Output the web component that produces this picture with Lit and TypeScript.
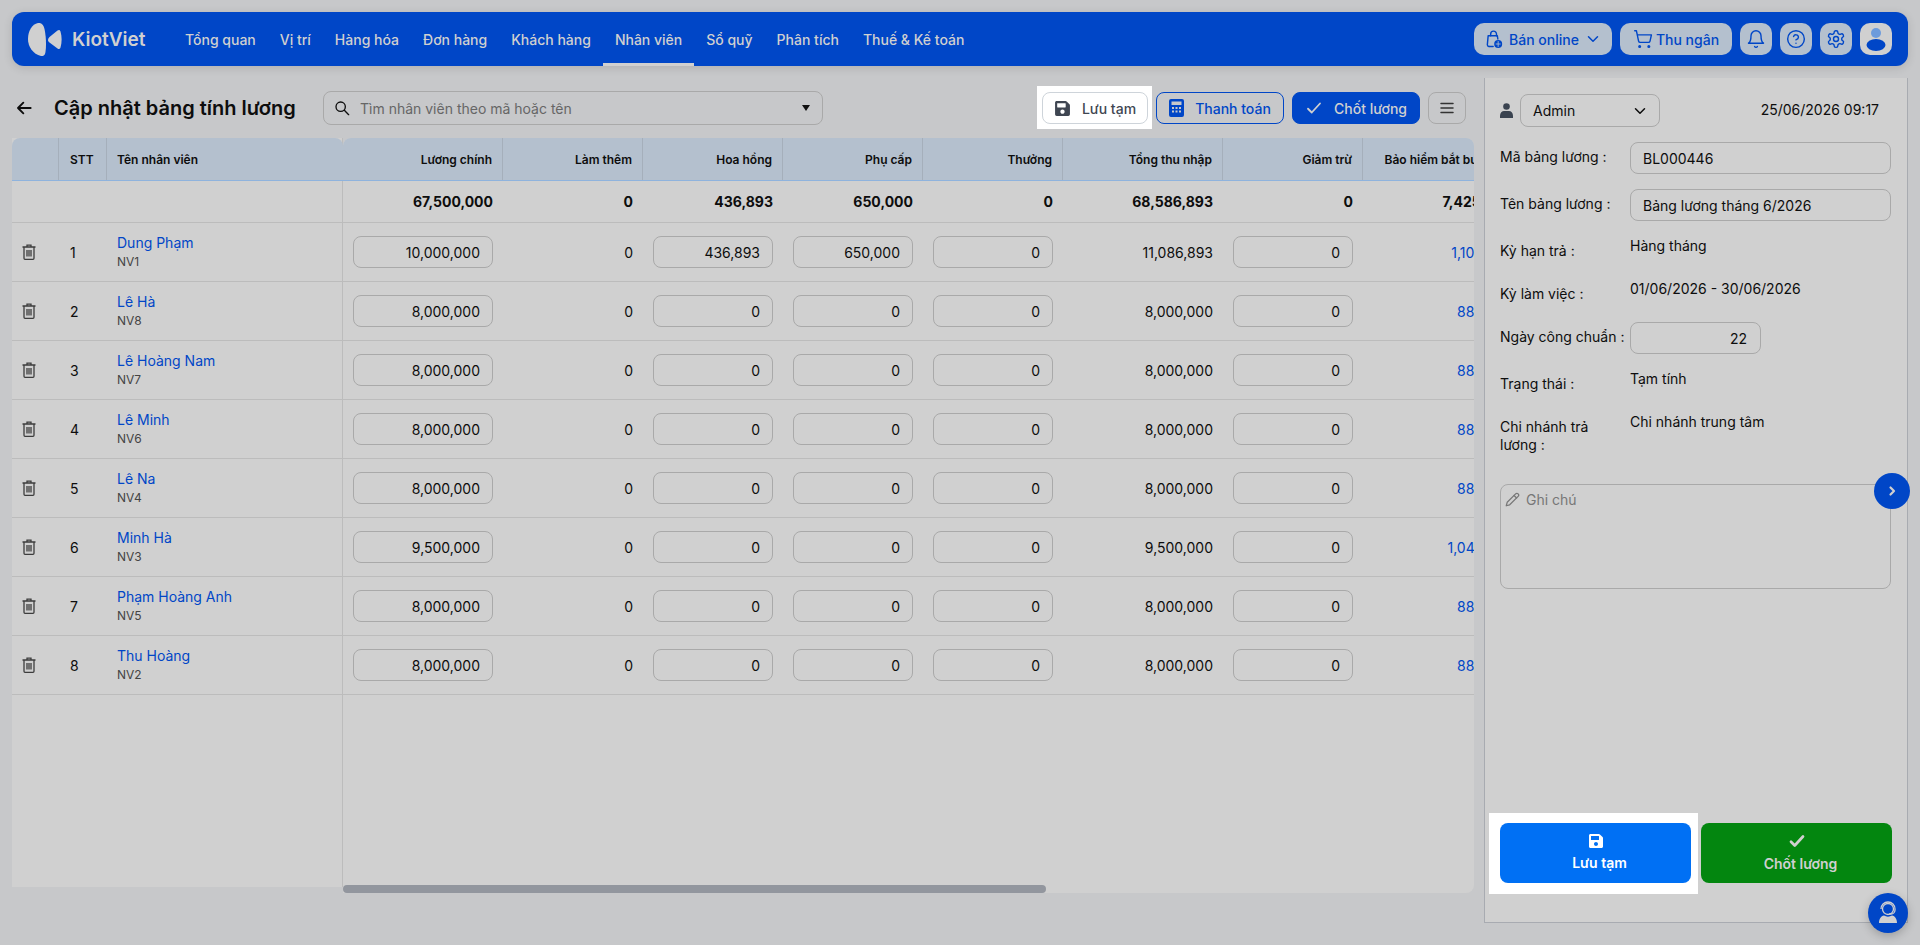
import { LitElement, html, css, svg } from "lit";
import { customElement } from "lit/decorators.js";

const NAV = ["Tổng quan", "Vị trí", "Hàng hóa", "Đơn hàng", "Khách hàng", "Nhân viên", "Sổ quỹ", "Phân tích", "Thuế & Kế toán"];

const COLS = [
  { label: "Lương chính", width: 160 },
  { label: "Làm thêm", width: 140 },
  { label: "Hoa hồng", width: 140 },
  { label: "Phụ cấp", width: 140 },
  { label: "Thưởng", width: 140 },
  { label: "Tổng thu nhập", width: 160 },
  { label: "Giảm trừ", width: 140 },
  { label: "Bảo hiểm bắt buộc", width: 160 },
];

const TOTALS = ["67,500,000", "0", "436,893", "650,000", "0", "68,586,893", "0", "7,425,000"];

const STAFF = [
  { name: "Dung Phạm", code: "NV1", base: "10,000,000", bonus: "436,893", allowance: "650,000", total: "11,086,893", ins: "1,100,000" },
  { name: "Lê Hà", code: "NV8", base: "8,000,000", bonus: "0", allowance: "0", total: "8,000,000", ins: "880,000" },
  { name: "Lê Hoàng Nam", code: "NV7", base: "8,000,000", bonus: "0", allowance: "0", total: "8,000,000", ins: "880,000" },
  { name: "Lê Minh", code: "NV6", base: "8,000,000", bonus: "0", allowance: "0", total: "8,000,000", ins: "880,000" },
  { name: "Lê Na", code: "NV4", base: "8,000,000", bonus: "0", allowance: "0", total: "8,000,000", ins: "880,000" },
  { name: "Minh Hà", code: "NV3", base: "9,500,000", bonus: "0", allowance: "0", total: "9,500,000", ins: "1,045,000" },
  { name: "Phạm Hoàng Anh", code: "NV5", base: "8,000,000", bonus: "0", allowance: "0", total: "8,000,000", ins: "880,000" },
  { name: "Thu Hoàng", code: "NV2", base: "8,000,000", bonus: "0", allowance: "0", total: "8,000,000", ins: "880,000" },
];

const stroke = (size: number, body: unknown, sw = 2) => html`<svg
  width=${size}
  height=${size}
  viewBox="0 0 24 24"
  fill="none"
  stroke="currentColor"
  stroke-width=${sw}
  stroke-linecap="round"
  stroke-linejoin="round"
>${body}</svg>`;

const saveIcon = (size: number) => html`<svg width=${size} height=${size} viewBox="0 0 448 512" fill="currentColor">
  <path d="M433.941 129.941l-83.882-83.882A48 48 0 0 0 316.118 32H48C21.49 32 0 53.49 0 80v352c0 26.51 21.49 48 48 48h352c26.51 0 48-21.49 48-48V163.882a48 48 0 0 0-14.059-33.941zM224 416c-35.346 0-64-28.654-64-64 0-35.346 28.654-64 64-64s64 28.654 64 64c0 35.346-28.654 64-64 64zm96-304.52V212c0 6.627-5.373 12-12 12H76c-6.627 0-12-5.373-12-12V108c0-6.627 5.373-12 12-12h228.52c3.183 0 6.235 1.264 8.485 3.515l3.48 3.48A11.996 11.996 0 0 1 320 111.48z" />
</svg>`;

const calcIcon = html`<svg width="15" height="18" viewBox="0 0 15 18" fill="currentColor">
  <path fill-rule="evenodd" d="M2 0h11a2 2 0 0 1 2 2v14a2 2 0 0 1-2 2H2a2 2 0 0 1-2-2V2a2 2 0 0 1 2-2zm.5 2.500v3.500h10V2.500zM3 8v2h2V8zm3.500 0v2h2V8zM10 8v2h2V8zM3 11.500v2h2v-2zm3.500 0v2h2v-2zm3.500 0v2h2v-2z" />
</svg>`;

const trashIcon = html`<svg width="14" height="16" viewBox="0 0 14 16" fill="none" stroke="currentColor" stroke-width="1.300">
  <path d="M.5 3h13M5 3V1.200h4V3M2 3v11.300a1 1 0 0 0 1 1h8a1 1 0 0 0 1-1V3M5 6v6.500M7 6v6.500M9 6v6.500" />
</svg>`;

const userIcon = html`<svg width="13" height="15" viewBox="0 0 13 15" fill="currentColor">
  <circle cx="6.500" cy="3.500" r="3.300" />
  <path d="M0 15v-2.500C0 10 2 8 4 8h5c2 0 4 2 4 4.500V15z" />
</svg>`;

@customElement("app-root")
export class AppRoot extends LitElement {
  static styles = css`
    :host {
      display: block;
      width: 1920px;
      height: 945px;
      overflow: hidden;
      background: #c7c8ca;
      font-family: Inter, "Liberation Sans", sans-serif;
      font-size: 14px;
      color: #0d0d0d;
    }
    * {
      box-sizing: border-box;
    }
    svg {
      display: block;
      flex: none;
    }
    input,
    textarea,
    button {
      font: inherit;
      color: inherit;
      background: transparent;
      outline: none;
    }

    .topbar {
      display: flex;
      align-items: center;
      height: 54px;
      margin: 12px 12px 0;
      padding: 0 16px;
      border-radius: 12px;
      background: #0046c7;
      box-shadow: 0 2px 10px rgba(0, 0, 0, 0.12);
    }
    .logo {
      display: flex;
      align-items: center;
      gap: 10px;
      width: 145px;
      color: #d0d0d0;
      font-size: 19px;
      font-weight: 600;
    }
    .nav {
      display: flex;
      align-self: stretch;
    }
    .nav a {
      display: flex;
      align-items: center;
      padding: 3px 12px 0;
      color: #d0d0d0;
      font-weight: 500;
      border-bottom: 3px solid transparent;
    }
    .nav a.active {
      border-bottom-color: #d0d0d0;
    }
    .top-actions {
      display: flex;
      gap: 8px;
      margin-left: auto;
    }
    .pill {
      display: flex;
      align-items: center;
      justify-content: center;
      gap: 5px;
      height: 32px;
      border-radius: 10px;
      background: #b4c0ce;
      color: #0046c7;
      font-weight: 500;
    }
    .pill.online {
      width: 138px;
    }
    .pill.cashier {
      width: 112px;
      gap: 3px;
    }
    .pill.square {
      width: 32px;
    }
    .pill.avatar {
      background: #d0d0d0;
    }

    .content {
      display: flex;
      gap: 10px;
      margin: 12px 0 0 12px;
    }
    .main {
      width: 1462px;
      flex: none;
    }
    .titlebar {
      display: flex;
      align-items: center;
      height: 60px;
      padding: 0 8px 0 4px;
    }
    .titlebar h1 {
      width: 269px;
      margin: 0 0 0 22px;
      font-size: 20px;
      font-weight: 600;
      white-space: nowrap;
    }
    .search {
      display: flex;
      align-items: center;
      width: 500px;
      height: 34px;
      padding: 0 12px 0 10px;
      border: 1px solid #a9a9a9;
      border-radius: 8px;
    }
    .search input {
      flex: 1;
      min-width: 0;
      margin-left: 10px;
      border: 0;
      padding: 0;
    }
    .search input::placeholder {
      color: #666;
      opacity: 1;
    }
    .caret {
      width: 0;
      height: 0;
      border: 4px solid transparent;
      border-top: 6px solid #111;
      border-bottom: 0;
    }
    .actions {
      display: flex;
      align-items: center;
      gap: 8px;
      margin-left: auto;
    }
    .halo {
      margin: -6px -4px -5px -5px;
      padding: 6px 4px 5px 5px;
      background: #fff;
    }
    .btn {
      display: flex;
      align-items: center;
      justify-content: center;
      gap: 11px;
      height: 32px;
      width: 128px;
      border: 1px solid #0046c7;
      border-radius: 8px;
      font-weight: 500;
    }
    .btn.outline {
      color: #0046c7;
    }
    .btn.solid {
      background: #0046c7;
      color: #d0d0d0;
    }
    .btn.plain {
      width: 106px;
      border-color: #ced4da;
      background: #fff;
      color: #3f4652;
    }
    .btn.menu {
      width: 38px;
      border-color: #a9a9a9;
      color: #333;
    }

    .table {
      display: flex;
      height: 755px;
      align-items: flex-start;
    }
    .fixed {
      flex: none;
      width: 331px;
      height: 749px;
      background: #d0d0d0;
      border-right: 1px solid #bcbcbc;
    }
    .scroll {
      position: relative;
      flex: 1;
      min-width: 0;
      height: 755px;
      overflow: hidden;
      background: #d0d0d0;
      border-radius: 8px 8px 8px 0;
    }
    .row {
      display: flex;
      height: 59px;
      border-bottom: 1px solid #bcbcbc;
    }
    .row.head {
      height: 43px;
      background: #b4c0ce;
      border-bottom: 1px solid #8fb3dd;
      font-size: 12px;
      font-weight: 600;
    }
    .fixed .row.head {
      width: 331px;
      border-radius: 8px 8px 0 0;
    }
    .scroll .row {
      width: 1400px;
    }
    .row.total {
      height: 42px;
      font-weight: 700;
    }
    .cell {
      display: flex;
      align-items: center;
      flex: none;
      padding: 0 10px;
      white-space: nowrap;
    }
    .num {
      justify-content: flex-end;
    }
    .head .cell {
      border-right: 1px solid #a5afbb;
    }
    .head .cell.num:last-child {
      padding-right: 30px;
    }
    .c-del {
      width: 47px;
      padding: 0 0 0 10px;
      color: #3d3d3d;
    }
    .c-stt {
      width: 48px;
      padding: 0 0 0 11px;
    }
    .c-name {
      width: 235px;
      padding: 0 0 0 10px;
    }
    .fixed .head .c-name {
      border-right: 0;
    }
    .person b {
      display: block;
      font-weight: 400;
      color: #0046c7;
      line-height: 18px;
    }
    .person span {
      display: block;
      margin-top: 2px;
      font-size: 12px;
      line-height: 16px;
      color: #444;
    }
    .field {
      width: 100%;
      height: 32px;
      padding: 0 12px;
      border: 1px solid #a9a9a9;
      border-radius: 8px;
      text-align: right;
    }
    .link {
      color: #0046c7;
    }
    .thumb {
      position: absolute;
      left: 0;
      bottom: 0;
      width: 703px;
      height: 8px;
      border-radius: 4px;
      background: #92969e;
    }

    .panel {
      position: relative;
      display: flex;
      flex-direction: column;
      width: 424px;
      height: 845px;
      padding: 16px 15px 39px;
      background: #d0d0d0;
      border: 1px solid #a8abb1;
      border-top: 0;
    }
    .who {
      display: flex;
      align-items: center;
      gap: 7px;
      height: 33px;
      color: #3a4350;
    }
    .select {
      display: flex;
      align-items: center;
      justify-content: space-between;
      width: 140px;
      height: 33px;
      padding: 0 10px 0 12px;
      border: 1px solid #a9a9a9;
      border-radius: 8px;
      color: #0d0d0d;
    }
    .date {
      margin: -3px 13px 0 auto;
      color: #0d0d0d;
    }
    .form {
      display: flex;
      flex-direction: column;
      gap: 15px;
      margin-top: 15px;
    }
    .frow {
      display: grid;
      grid-template-columns: 130px 1fr;
      line-height: 18px;
    }
    .frow.text {
      min-height: 28px;
      padding-top: 1px;
    }
    .frow label {
      max-width: 126px;
      padding-top: 6px;
    }
    .frow.text label {
      padding-top: 5px;
    }
    .frow .value-input {
      text-align: left;
      width: 261px;
    }
    .frow .short {
      width: 131px;
      padding-right: 13px;
    }
    .note {
      position: relative;
      margin-top: 30px;
      width: 391px;
      height: 105px;
    }
    .note textarea {
      display: block;
      width: 100%;
      height: 100%;
      padding: 6px 8px 6px 25px;
      border: 1px solid #a9a9a9;
      border-radius: 8px;
      resize: none;
    }
    .note textarea::placeholder {
      color: #777;
      opacity: 1;
    }
    .pencil {
      position: absolute;
      left: 5px;
      top: 8px;
      color: #777;
    }
    .foot {
      display: flex;
      gap: 10px;
      margin-top: auto;
    }
    .halo-foot {
      margin: -10px -7px -11px -11px;
      padding: 10px 7px 11px 11px;
      background: #fff;
    }
    .big {
      display: flex;
      flex-direction: column;
      align-items: center;
      justify-content: center;
      gap: 5px;
      width: 191px;
      height: 60px;
      padding: 0 0 2px;
      border: 0;
      border-radius: 8px;
      background: #0070f4;
      color: #fff;
      font-weight: 600;
    }
    .big span {
      padding-left: 8px;
    }
    .big.green {
      background: #03860f;
      color: #d0d0d0;
    }
    .collapse {
      position: absolute;
      top: 395px;
      right: -3px;
      display: flex;
      align-items: center;
      justify-content: center;
      width: 36px;
      height: 36px;
      border-radius: 50%;
      background: #0046c7;
      color: #d0d0d0;
    }
    .support {
      position: absolute;
      right: -1px;
      bottom: -11px;
      display: flex;
      align-items: center;
      justify-content: center;
      width: 40px;
      height: 40px;
      border-radius: 50%;
      background: #0046c7;
      color: #d0d0d0;
      box-shadow: 0 3px 10px rgba(0, 0, 0, 0.22);
    }
  `;

  private renderLogo() {
    return html`<div class="logo">
      <svg width="34" height="33" viewBox="0 0 34 33" fill="currentColor">
        <path d="M10 0C4 1 0 8 0 16c0 8 5 15 13 17 3 .4 4-1 4.500-4 1-7 .5-16-1-23C15.500 2 14 -.5 10 0z" />
        <path d="M20 17c0-1 .5-2 1.500-3l8-6.500c1.500-1 2.500-.5 3 1 1.500 5 1.500 11 0 16-.5 1.500-1.500 2-3 1l-8-6c-1-.7-1.500-1.500-1.500-2.500z" />
      </svg>
      KiotViet
    </div>`;
  }

  private renderHeader() {
    return html`<header class="topbar">
      ${this.renderLogo()}
      <nav class="nav">
        ${NAV.map((n) => html`<a class=${n === "Nhân viên" ? "active" : ""}>${n}</a>`)}
      </nav>
      <div class="top-actions">
        <div class="pill online">
          ${stroke(
            20,
            svg`<path d="M6 21a2 2 0 0 1-2-2l1-11h11l.6 4" /><path d="M8 8V6a3.500 3.500 0 0 1 7 0v2" /><path d="M6 21h5" /><circle cx="17" cy="18" r="4.800" fill="currentColor" stroke="none" /><path d="M17 15v6M14.500 18h5" stroke="#b4c0ce" stroke-width="1" />`,
            1.7
          )}
          Bán online
          ${stroke(18, svg`<path d="M6 9l6 6 6-6" />`)}
        </div>
        <div class="pill cashier">
          ${stroke(
            20,
            svg`<circle cx="8" cy="21" r="1" /><circle cx="19" cy="21" r="1" /><path d="M2.050 2.050h2l2.660 12.420a2 2 0 0 0 2 1.580h9.780a2 2 0 0 0 1.950-1.570l1.650-7.430H5.120" />`,
            1.7
          )}
          Thu ngân
        </div>
        <div class="pill square">
          ${stroke(20, svg`<path d="M6 8a6 6 0 0 1 12 0c0 7 3 9 3 9H3s3-2 3-9" /><path d="M10.300 21a1.940 1.940 0 0 0 3.400 0" />`, 1.7)}
        </div>
        <div class="pill square">
          ${stroke(
            20,
            svg`<circle cx="12" cy="12" r="10" /><path d="M9.090 9a3 3 0 0 1 5.830 1c0 2-3 3-3 3" /><path d="M12 17h.01" />`,
            1.7
          )}
        </div>
        <div class="pill square">
          ${stroke(
            20,
            svg`<path d="M12.220 2h-.44a2 2 0 0 0-2 2v.18a2 2 0 0 1-1 1.730l-.43.25a2 2 0 0 1-2 0l-.15-.08a2 2 0 0 0-2.730.73l-.22.38a2 2 0 0 0 .73 2.730l.15.1a2 2 0 0 1 1 1.720v.51a2 2 0 0 1-1 1.740l-.15.09a2 2 0 0 0-.73 2.730l.22.38a2 2 0 0 0 2.730.73l.15-.08a2 2 0 0 1 2 0l.43.25a2 2 0 0 1 1 1.730V20a2 2 0 0 0 2 2h.44a2 2 0 0 0 2-2v-.18a2 2 0 0 1 1-1.730l.43-.25a2 2 0 0 1 2 0l.15.08a2 2 0 0 0 2.730-.73l.22-.39a2 2 0 0 0-.73-2.730l-.15-.08a2 2 0 0 1-1-1.740v-.5a2 2 0 0 1 1-1.740l.15-.09a2 2 0 0 0 .73-2.730l-.22-.38a2 2 0 0 0-2.730-.73l-.15.08a2 2 0 0 1-2 0l-.43-.25a2 2 0 0 1-1-1.730V4a2 2 0 0 0-2-2z" /><circle cx="12" cy="12" r="3" />`,
            1.7
          )}
        </div>
        <div class="pill square avatar">
          <svg width="20" height="24" viewBox="0 0 20 24">
            <circle cx="10" cy="6" r="5" fill="#6d9bdc" />
            <ellipse cx="10" cy="18" rx="9.500" ry="6" fill="#0046c7" />
          </svg>
        </div>
      </div>
    </header>`;
  }

  private renderTitlebar() {
    return html`<div class="titlebar">
      ${stroke(16, svg`<path d="M22 12H3M11 4l-8 8 8 8" />`, 2.8)}
      <h1>Cập nhật bảng tính lương</h1>
      <div class="search">
        ${stroke(16, svg`<circle cx="10" cy="10" r="7" /><path d="M15.500 15.500L22 22" />`, 2)}
        <input placeholder="Tìm nhân viên theo mã hoặc tên" />
        <span class="caret"></span>
      </div>
      <div class="actions">
        <div class="halo">
          <button class="btn plain">${saveIcon(17)} Lưu tạm</button>
        </div>
        <div class="btn outline">${calcIcon} Thanh toán</div>
        <div class="btn solid">${stroke(18, svg`<path d="M4 13l5 5L20 6" />`, 2.4)} Chốt lương</div>
        <div class="btn menu">${stroke(18, svg`<path d="M4 6h16M4 12h16M4 18h16" />`, 2)}</div>
      </div>
    </div>`;
  }

  private renderFixedColumn() {
    return html`<div class="fixed">
      <div class="row head">
        <div class="cell c-del"></div>
        <div class="cell c-stt">STT</div>
        <div class="cell c-name">Tên nhân viên</div>
      </div>
      <div class="row total"></div>
      ${STAFF.map(
        (s, i) => html`<div class="row">
          <div class="cell c-del">${trashIcon}</div>
          <div class="cell c-stt">${i + 1}</div>
          <div class="cell c-name">
            <div class="person"><b>${s.name}</b><span>${s.code}</span></div>
          </div>
        </div>`
      )}
    </div>`;
  }

  private renderScrollColumns() {
    const input = (w: number, v: string) =>
      html`<div class="cell" style="width:${w}px"><input class="field" .value=${v} /></div>`;
    const text = (w: number, v: string, cls = "") =>
      html`<div class="cell num ${cls}" style="width:${w}px">${v}</div>`;
    return html`<div class="scroll">
      <div class="row head">
        ${COLS.map((c) => html`<div class="cell num" style="width:${c.width}px">${c.label}</div>`)}
      </div>
      <div class="row total">${COLS.map((c, i) => text(c.width, TOTALS[i]))}</div>
      ${STAFF.map(
        (s) => html`<div class="row">
          ${input(160, s.base)} ${text(140, "0")} ${input(140, s.bonus)} ${input(140, s.allowance)} ${input(140, "0")}
          ${text(160, s.total)} ${input(140, "0")} ${text(160, s.ins, "link")}
        </div>`
      )}
      <div class="thumb"></div>
    </div>`;
  }

  private renderPanel() {
    return html`<aside class="panel">
      <div class="who">
        ${userIcon}
        <div class="select">Admin ${stroke(18, svg`<path d="M6 9l6 6 6-6" />`)}</div>
        <span class="date">25/06/2026 09:17</span>
      </div>
      <div class="form">
        <div class="frow"><label>Mã bảng lương :</label><input class="field value-input" .value=${"BL000446"} /></div>
        <div class="frow"><label>Tên bảng lương :</label><input class="field value-input" .value=${"Bảng lương tháng 6/2026"} /></div>
        <div class="frow text"><label>Kỳ hạn trả :</label><span>Hàng tháng</span></div>
        <div class="frow text"><label>Kỳ làm việc :</label><span>01/06/2026 - 30/06/2026</span></div>
        <div class="frow"><label>Ngày công chuẩn :</label><input class="field short" .value=${"22"} /></div>
        <div class="frow text"><label>Trạng thái :</label><span>Tạm tính</span></div>
        <div class="frow text"><label>Chi nhánh trả lương :</label><span>Chi nhánh trung tâm</span></div>
      </div>
      <div class="note">
        <textarea placeholder="Ghi chú"></textarea>
        <span class="pencil">${stroke(
          15,
          svg`<path d="M17 3a2.800 2.800 0 0 1 4 4L7.500 20.500 2 22l1.500-5.500z" /><path d="M14.500 5.500l4 4" />`,
          2
        )}</span>
      </div>
      <div class="foot">
        <div class="halo-foot">
          <button class="big">${saveIcon(16)} <span>Lưu tạm</span></button>
        </div>
        <div class="big green">${stroke(18, svg`<path d="M4 13l5 5L20 6" />`, 3.6)} <span>Chốt lương</span></div>
      </div>
      <div class="collapse">${stroke(12, svg`<path d="M9 5l7 7-7 7" />`, 4.4)}</div>
      <div class="support">
        <svg width="24" height="24" viewBox="0 0 24 24" fill="none" stroke="currentColor" stroke-width="1.300">
          <circle cx="12" cy="8" r="5.500" />
          <path d="M5 8a7 7 0 0 1 14 0v1a4 4 0 0 1-4 4h-2" />
          <path d="M3 22c0-4 2-7 5-7.500 2.500 1.500 5.500 1.500 8 0 3 .5 5 3.500 5 7.500z" fill="currentColor" stroke="none" />
        </svg>
      </div>
    </aside>`;
  }

  render() {
    return html`
      ${this.renderHeader()}
      <div class="content">
        <main class="main">
          ${this.renderTitlebar()}
          <div class="table">${this.renderFixedColumn()} ${this.renderScrollColumns()}</div>
        </main>
        ${this.renderPanel()}
      </div>
    `;
  }
}

declare global {
  interface HTMLElementTagNameMap {
    "app-root": AppRoot;
  }
}
